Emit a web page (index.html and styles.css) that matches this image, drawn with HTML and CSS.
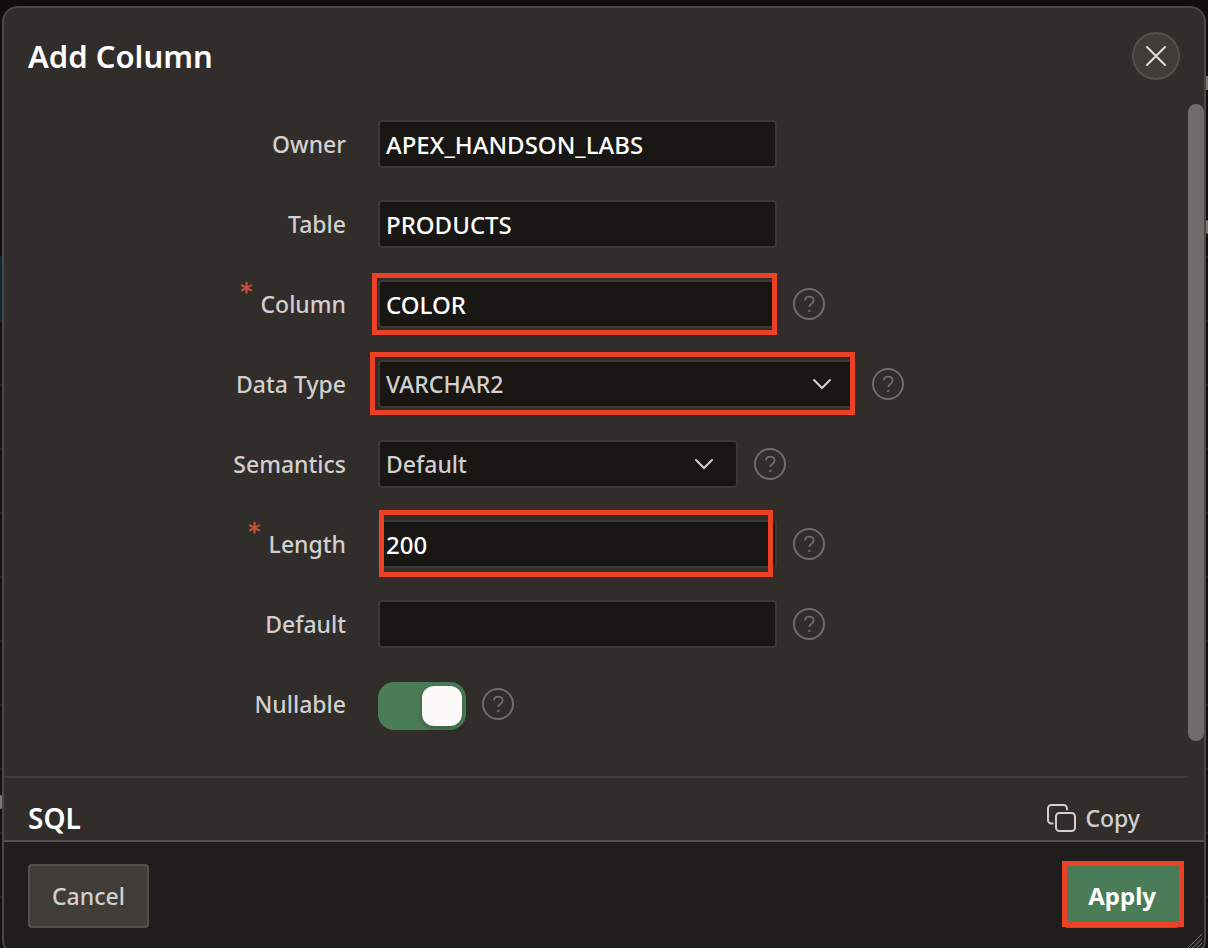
FILE: index.html
```html
<!DOCTYPE html>
<html lang="en">
<head>
<meta charset="utf-8">
<title>Add Column</title>
<link rel="stylesheet" href="styles.css">
</head>
<body>
<svg class="sprite" aria-hidden="true">
  <symbol id="help" viewBox="0 0 32 32">
    <circle cx="16" cy="16" r="15" fill="none" stroke="currentColor" stroke-width="2"/>
    <path d="M12 12.500c0-2.200 1.800-3.800 4.300-3.800s4.300 1.600 4.300 3.900c0 3.300-4.300 3.300-4.300 6.400" fill="none" stroke="currentColor" stroke-width="1.800"/>
    <circle cx="16.300" cy="22.900" r="1.200" fill="currentColor"/>
  </symbol>
</svg>
<div class="backdrop" aria-hidden="true">
  <i class="mark mark-a"></i><i class="mark mark-b"></i><i class="mark mark-c"></i><i class="mark mark-d"></i>
</div>
<div class="dialog" role="dialog" aria-labelledby="title">
  <header class="dialog-header">
    <h1 class="title" id="title">Add Column</h1>
    <button class="close" type="button" aria-label="Close">
      <svg viewBox="0 0 20 20" width="20" height="20"><path d="M1 1l18 18M19 1L1 19" fill="none" stroke="currentColor" stroke-width="2" stroke-linecap="round"/></svg>
    </button>
  </header>

  <div class="dialog-body">
    <div class="content">
      <form class="form" id="form">
        <div class="row">
          <label class="label" for="owner">Owner</label>
          <div class="control"><div class="field"><input class="input" id="owner" value="APEX_HANDSON_LABS"></div></div>
        </div>
        <div class="row">
          <label class="label" for="table">Table</label>
          <div class="control"><div class="field"><input class="input" id="table" value="PRODUCTS"></div></div>
        </div>
        <div class="row">
          <label class="label" for="column"><span class="required">*</span>Column</label>
          <div class="control">
            <div class="field marked marked-column"><input class="input" id="column" value="COLOR" required></div>
            <button class="help" type="button" aria-label="Help: Column"><svg><use href="#help"/></svg></button>
          </div>
        </div>
        <div class="row">
          <label class="label" for="type">Data Type</label>
          <div class="control">
            <div class="field field-wide marked marked-type">
              <select class="input select" id="type"><option>VARCHAR2</option></select>
              <svg class="chevron" viewBox="0 0 20 12"><path d="M2 2l8 8 8-8" fill="none" stroke="currentColor" stroke-width="2" stroke-linecap="round"/></svg>
            </div>
            <button class="help" type="button" aria-label="Help: Data Type"><svg><use href="#help"/></svg></button>
          </div>
        </div>
        <div class="row">
          <label class="label" for="semantics">Semantics</label>
          <div class="control">
            <div class="field field-narrow">
              <select class="input select" id="semantics"><option>Default</option></select>
              <svg class="chevron" viewBox="0 0 20 12"><path d="M2 2l8 8 8-8" fill="none" stroke="currentColor" stroke-width="2" stroke-linecap="round"/></svg>
            </div>
            <button class="help" type="button" aria-label="Help: Semantics"><svg><use href="#help"/></svg></button>
          </div>
        </div>
        <div class="row">
          <label class="label" for="length"><span class="required">*</span>Length</label>
          <div class="control">
            <div class="field marked marked-length"><input class="input" id="length" value="200" required></div>
            <button class="help" type="button" aria-label="Help: Length"><svg><use href="#help"/></svg></button>
          </div>
        </div>
        <div class="row">
          <label class="label" for="default">Default</label>
          <div class="control">
            <div class="field"><input class="input" id="default"></div>
            <button class="help" type="button" aria-label="Help: Default"><svg><use href="#help"/></svg></button>
          </div>
        </div>
        <div class="row">
          <label class="label" for="nullable">Nullable</label>
          <div class="control">
            <input class="switch" id="nullable" type="checkbox" role="switch" checked>
            <button class="help" type="button" aria-label="Help: Nullable"><svg><use href="#help"/></svg></button>
          </div>
        </div>
      </form>
      <section class="sql">
        <h2 class="sql-title">SQL</h2>
        <button class="copy" type="button">
          <svg viewBox="0 0 30 30" width="30" height="30" fill="none" stroke="currentColor" stroke-width="2" stroke-linecap="round">
            <rect x="9" y="10" width="19" height="18" rx="3.500"/>
            <path d="M5.500 20.500H4.500A3.500 3.500 0 0 1 1 17V5.500A3.500 3.500 0 0 1 4.500 2H16.500A3.500 3.500 0 0 1 20 5.500V6.500"/>
          </svg>
          Copy
        </button>
      </section>
    </div>
    <div class="scrollbar" aria-hidden="true"><div class="thumb"></div></div>
  </div>

  <footer class="dialog-footer">
    <button class="button" type="button">Cancel</button>
    <button class="button button-hot marked marked-apply" type="submit" form="form">Apply</button>
    <svg class="grip" viewBox="0 0 20 20" aria-hidden="true"><path d="M0 20L20 0M5 20L20 5M10 20L20 10M15 20L20 15" stroke="currentColor" stroke-width="1" fill="none"/></svg>
  </footer>
</div>
</body>
</html>
```

FILE: styles.css
```css
* { box-sizing: border-box; }

body {
  margin: 0;
  height: 100vh;
  overflow: hidden;
  display: flex;
  background: #100f0d;
  color: #d2d0ce;
  font: 500 24px/32px "Noto Sans", sans-serif;
}

button, input, select { font: inherit; color: inherit; margin: 0; }

.sprite { position: absolute; width: 0; height: 0; }

.backdrop {
  position: absolute;
  inset: 0;
  background: repeating-linear-gradient(#24211f 0 2px, #141210 2px 64px) 0 256px / 100% 100% no-repeat, #100f0d;
}
.mark { position: absolute; width: 3px; height: 14px; background: #777; }
.mark-a { left: 0; top: 258px; height: 62px; background: #0c2633; }
.mark-b { left: 0; top: 795px; border-radius: 0 3px 3px 0; }
.mark-c { right: 0; top: 76px; }
.mark-d { right: 0; top: 220px; border-radius: 3px 0 0 3px; }

.dialog {
  position: relative;
  flex: 1;
  display: flex;
  flex-direction: column;
  margin: 6px 2px -8px;
  border: 2px solid #4c4743;
  border-radius: 16px;
  background: #312d2a;
  overflow: hidden;
}

.dialog-header {
  flex: none;
  height: 96px;
  padding: 0 24px;
  display: flex;
  align-items: center;
  justify-content: space-between;
}
.title { margin: 0; color: #fff; font-size: 31px; line-height: 40px; font-weight: 600; }
.close {
  width: 48px;
  height: 48px;
  padding: 0;
  border: 2px solid #54504b;
  border-radius: 50%;
  background: #403c38;
  color: #e2e0de;
  display: grid;
  place-items: center;
}

.dialog-body { flex: 1; min-height: 0; display: flex; overflow: hidden; }
.content { flex: 1; min-width: 0; }
.scrollbar { width: 16px; }
.thumb { height: 637px; max-height: 90%; border-radius: 8px; background: #6f6d69; }

.form { display: grid; gap: 32px; padding: 16px 0 48px; }
.row {
  display: grid;
  grid-template-columns: 342px 1fr;
  column-gap: 32px;
  align-items: center;
  height: 48px;
}
.label { display: flex; justify-content: flex-end; gap: 8px; font-size: 23px; }
.required {
  color: #c2513c;
  font: 700 24px/24px "DejaVu Sans", sans-serif;
  margin-top: -8px;
}
.control { display: flex; align-items: center; gap: 16px; height: 48px; }
.field { position: relative; width: 399px; height: 48px; }
.field-wide { width: 478px; }
.field-narrow { width: 360px; }
.input {
  display: block;
  width: 100%;
  height: 48px;
  padding: 0 6px;
  border: 2px solid #3c3835;
  border-radius: 4px;
  background: #191714;
  color: #fff;
  outline: 0;
}
.select { appearance: none; color: #d2d0ce; font-size: 23px; }
.chevron {
  position: absolute;
  right: 24px;
  top: 18px;
  width: 20px;
  height: 12px;
  pointer-events: none;
}
.help {
  flex: none;
  width: 32px;
  height: 32px;
  padding: 0;
  border: 0;
  background: none;
  color: #6f6c69;
}
.help svg { display: block; width: 32px; height: 32px; }

.switch {
  appearance: none;
  width: 88px;
  height: 48px;
  margin-top: 4px;
  padding: 4px;
  border-radius: 16px;
  background: #4a7d57;
  display: flex;
  justify-content: flex-end;
}
.switch::before {
  content: "";
  width: 40px;
  border-radius: 12px;
  background: #fcfbfa;
  box-shadow: 0 2px 6px #0004;
}

.sql {
  display: flex;
  align-items: center;
  justify-content: space-between;
  padding: 20px 24px 0;
  border-top: 2px solid #403c39;
}
.sql-title { margin: 0; color: #fff; font-size: 28px; line-height: 40px; font-weight: 600; }
.copy {
  display: flex;
  align-items: center;
  gap: 8px;
  padding: 0 24px;
  border: 0;
  background: none;
  font-size: 23px;
}

.dialog-footer {
  position: relative;
  flex: none;
  height: 114px;
  padding: 22px 24px 0;
  display: flex;
  align-items: flex-start;
  justify-content: space-between;
  border-top: 2px solid #54504b;
  background: #201e1c;
}
.button {
  height: 64px;
  padding: 0 22px;
  border: 2px solid #54504b;
  border-radius: 4px;
  background: #403c38;
  font-size: 23px;
}
.button-hot { border-color: #4a7d57; background: #4a7d57; color: #fff; font-size: 24px; font-weight: 700; }
.grip { position: absolute; right: 2px; top: 92px; width: 18px; height: 18px; color: #8a8784; }

/* Callout frames laid over the highlighted controls */
.marked { position: relative; }
.marked::after { content: ""; position: absolute; border: 5px solid #ec4125; pointer-events: none; }
.marked-column::after { inset: -7px 0 -7px -6px; }
.marked-type::after { inset: -8px 1px -7px -8px; }
.marked-length::after { inset: -10px 4px -9px 1px; }
.marked-apply::after { inset: -5px -6px -1px -4px; }
```
